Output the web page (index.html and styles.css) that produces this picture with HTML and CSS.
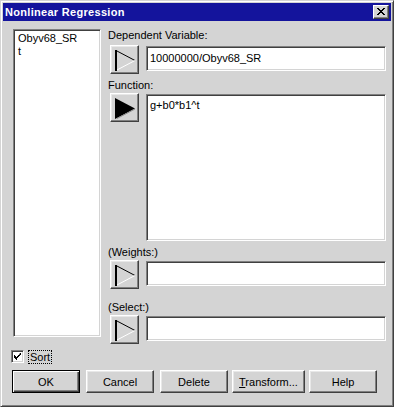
FILE: index.html
```html
<!DOCTYPE html>
<html lang="en">
<head>
  <meta charset="UTF-8" />
  <title>Nonlinear Regression</title>
  <link rel="stylesheet" href="styles.css">
</head>
<body>
  <div class="window">
    <div class="titlebar">
      <span class="title">Nonlinear Regression</span>
      <button class="close">
        <svg width="8" height="7" viewBox="0 0 8 7">
          <path d="M0 0h2v1h1v1h2v-1h1v-1h2v1h-1v1h-1v1h-1v1h1v1h1v1h1v1h-2v-1h-1v-1h-2v1h-1v1h-2v-1h1v-1h1v-1h1v-1h-1v-1h-1v-1h-1z" fill="#000"/>
        </svg>
      </button>
    </div>

    <div class="content">
      <div class="main">
        <div class="left">
          <div class="listbox">
            <div class="item">Obyv68_SR</div>
            <div class="item">t</div>
          </div>
          <div class="sort">
            <span class="check">
              <svg width="7" height="7" viewBox="0 0 7 7">
                <path d="M6 0h1v2h-1v1h-1v1h-1v1h-1v2h-1v-1h-1v-1h-1v-3h1v1h1v1h1v-1h1v-1h1z" fill="#000"/>
              </svg>
            </span>
            <span class="sort-label">Sort</span>
          </div>
        </div>

        <div class="right">
          <div class="label">Dependent Variable:</div>
          <div class="row">
            <button class="arrow">
              <svg width="25" height="25" viewBox="0 0 25 25">
                <line x1="4" y1="3.5" x2="23" y2="13.5" stroke="#000"/>
                <line x1="4" y1="23.5" x2="23" y2="13.5" stroke="#fff"/>
                <rect x="3" y="3" width="2" height="21" fill="#000"/>
              </svg>
            </button>
            <div class="field">10000000/Obyv68_SR</div>
          </div>

          <div class="label gap">Function:</div>
          <div class="row">
            <button class="arrow">
              <svg width="25" height="25" viewBox="0 0 25 25">
                <polygon points="3,3 23,13.5 3,24" fill="#000"/>
                <line x1="5" y1="23.5" x2="23" y2="14" stroke="#8a8a8a"/>
              </svg>
            </button>
            <div class="field area">g+b0*b1^t</div>
          </div>

          <div class="label gap">(Weights:)</div>
          <div class="row">
            <button class="arrow">
              <svg width="25" height="25" viewBox="0 0 25 25">
                <line x1="4" y1="3.5" x2="23" y2="13.5" stroke="#000"/>
                <line x1="4" y1="23.5" x2="23" y2="13.5" stroke="#fff"/>
                <rect x="3" y="3" width="2" height="21" fill="#000"/>
              </svg>
            </button>
            <div class="field"></div>
          </div>

          <div class="label gap-wide">(Select:)</div>
          <div class="row">
            <button class="arrow">
              <svg width="25" height="25" viewBox="0 0 25 25">
                <line x1="4" y1="3.5" x2="23" y2="13.5" stroke="#000"/>
                <line x1="4" y1="23.5" x2="23" y2="13.5" stroke="#fff"/>
                <rect x="3" y="3" width="2" height="21" fill="#000"/>
              </svg>
            </button>
            <div class="field"></div>
          </div>
        </div>
      </div>

      <div class="buttons">
        <button class="btn default">OK</button>
        <button class="btn">Cancel</button>
        <button class="btn">Delete</button>
        <button class="btn wide"><u>T</u>ransform...</button>
        <button class="btn">Help</button>
      </div>
    </div>
  </div>
</body>
</html>
```

FILE: styles.css
```css
* {
  margin: 0;
  padding: 0;
  box-sizing: border-box;
}

body {
  font-family: 'Liberation Sans', Arial, sans-serif;
  font-size: 11px;
  color: #000;
  background: #d4d4d4;
}

.window {
  width: 394px;
  height: 407px;
  padding: 2px;
  background: #d4d4d4;
  border: 1px solid;
  border-color: #d4d4d4 #404040 #404040 #d4d4d4;
  box-shadow: inset 1px 1px #fff, inset -1px -1px #808080;
}

.titlebar {
  height: 18px;
  background: #14149c;
  display: flex;
  align-items: center;
  justify-content: space-between;
  padding: 0 2px 0 2px;
}

.title {
  color: #fff;
  font-weight: bold;
  font-size: 11px;
  letter-spacing: 0.3px;
}

.close {
  width: 16px;
  height: 14px;
  background: #d4d4d4;
  border: 1px solid;
  border-color: #fff #404040 #404040 #fff;
  box-shadow: inset -1px -1px #808080;
  display: flex;
  align-items: center;
  justify-content: center;
  padding-bottom: 1px;
}

.close svg {
  display: block;
}

.content {
  padding: 8px 0 0 10px;
}

.main {
  display: flex;
  height: 341px;
}

/* left: variable list + sort */
.left {
  width: 88px;
  display: flex;
  flex-direction: column;
}

.listbox {
  height: 308px;
  background: #fff;
  border: 1px solid;
  border-color: #808080 #fff #fff #808080;
  box-shadow: inset 1px 1px #404040, inset -1px -1px #d4d4d4;
  padding: 2px 3px;
}

.item {
  line-height: 13px;
  padding-left: 1px;
}

.sort {
  display: flex;
  align-items: center;
  margin: 13px 0 0 -2px;
  height: 13px;
}

.check {
  width: 13px;
  height: 13px;
  background: #fff;
  border: 1px solid;
  border-color: #808080 #fff #fff #808080;
  box-shadow: inset 1px 1px #404040, inset -1px -1px #d4d4d4;
  display: flex;
  align-items: center;
  justify-content: center;
}

.check svg {
  display: block;
}

.sort-label {
  margin-left: 4px;
  padding: 0 1px;
  line-height: 12px;
  border: 1px dotted #000;
}

/* right: formula fields */
.right {
  margin-left: 7px;
  display: flex;
  flex-direction: column;
}

.label {
  line-height: 13px;
  height: 13px;
}

.label.gap {
  margin-top: 5px;
}

.label.gap-wide {
  margin-top: 12px;
}

.row {
  display: flex;
  gap: 7px;
  margin-top: 3px;
  padding-left: 2px;
}

.label.gap + .row,
.label.gap-wide + .row {
  margin-top: 1px;
}

.arrow {
  width: 29px;
  height: 29px;
  background: #d4d4d4;
  border: 1px solid;
  border-color: #fff #404040 #404040 #fff;
  box-shadow: inset -1px -1px #808080, inset 1px 1px #e8e8e8;
  padding: 1px;
  flex-shrink: 0;
}

.arrow svg {
  display: block;
}

.field {
  width: 240px;
  height: 25px;
  margin-top: 1px;
  background: #fff;
  border: 1px solid;
  border-color: #808080 #fff #fff #808080;
  box-shadow: inset 1px 1px #404040, inset -1px -1px #d4d4d4;
  padding: 4px 3px;
  line-height: 14px;
}

.field.area {
  height: 147px;
  padding: 3px 3px;
}

/* bottom button row */
.buttons {
  display: flex;
  margin-left: -1px;
}

.btn {
  width: 68px;
  height: 23px;
  margin-right: 6px;
  font-family: 'Liberation Sans', Arial, sans-serif;
  font-size: 11px;
  background: #d4d4d4;
  border: 1px solid;
  border-color: #fff #404040 #404040 #fff;
  box-shadow: inset -1px -1px #808080, inset 1px 1px #e8e8e8;
}

.btn.wide {
  width: 73px;
  margin-left: -2px;
  margin-right: 4px;
}

.btn.default {
  border: 1px solid #000;
  box-shadow: inset 1px 1px #fff, inset -1px -1px #404040, inset -2px -2px #808080;
}
```
